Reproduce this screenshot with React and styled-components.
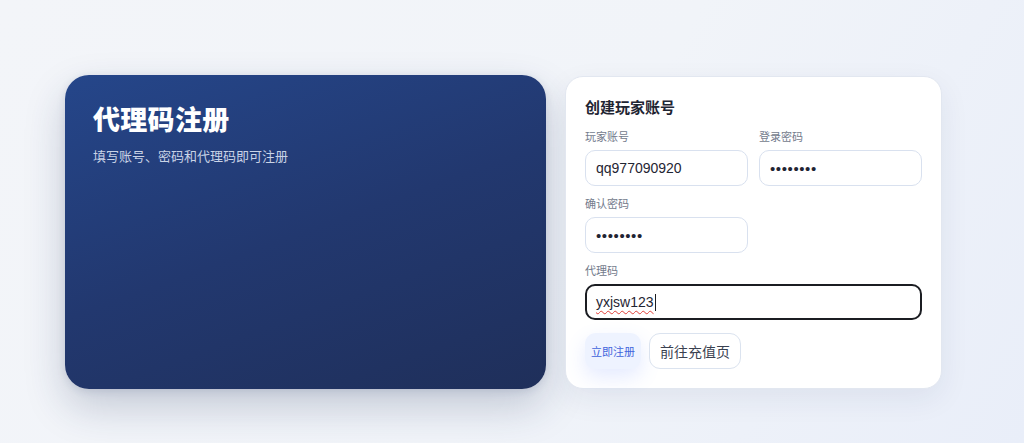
import React from "react";
import styled, { createGlobalStyle } from "styled-components";

const Global = createGlobalStyle`
  html, body { margin: 0; padding: 0; }
  body {
    width: 1024px;
    height: 443px;
    overflow: hidden;
    background: linear-gradient(120deg, #f3f5f9 0%, #f1f4f9 55%, #e9eef9 100%);
    font-family: "Inter", "Noto Sans CJK SC", sans-serif;
  }
`;

const Page = styled.div`
  box-sizing: border-box;
  height: 443px;
  padding: 75px 0 0 65px;
`;

const Layout = styled.div`
  display: grid;
  grid-template-columns: 481px 377px;
  column-gap: 19px;
  align-items: start;
`;

const Hero = styled.section`
  box-sizing: border-box;
  height: 314px;
  border-radius: 24px;
  padding: 24px 28px;
  background: linear-gradient(160deg, #25468a 0%, #22386f 50%, #1f2f5a 100%);
  box-shadow: 0 18px 40px rgba(30, 48, 90, 0.22), 0 2px 8px rgba(30, 48, 90, 0.12);
  color: #fff;
`;

const HeroTitle = styled.h1`
  margin: 0;
  font-family: "Noto Sans CJK SC", sans-serif;
  font-weight: 900;
  font-size: 27px;
  line-height: 40px;
  letter-spacing: 0.3px;
`;

const HeroText = styled.p`
  margin: 8px 0 0;
  font-family: "Noto Sans CJK SC", sans-serif;
  font-size: 13px;
  line-height: 18px;
  color: #c9d3e6;
`;

const Card = styled.section`
  box-sizing: border-box;
  height: 313px;
  margin-top: 1px;
  border-radius: 18px;
  background: #fff;
  border: 1px solid #e2e7f0;
  box-shadow: 0 10px 30px rgba(30, 48, 90, 0.07);
  padding: 18px 20px 20px 19px;
`;

const CardTitle = styled.h2`
  margin: 0 0 10px;
  font-family: "Noto Sans CJK SC", sans-serif;
  font-size: 15px;
  line-height: 24px;
  font-weight: 700;
  color: #1f2533;
`;

const Grid = styled.div`
  display: grid;
  grid-template-columns: 163px 163px;
  column-gap: 11px;
  row-gap: 10px;
`;

const Field = styled.label`
  display: flex;
  flex-direction: column;
  gap: 7px;
  grid-column: ${(p) => (p.$wide ? "1 / -1" : "auto")};
`;

const Label = styled.span`
  font-family: "Noto Sans CJK SC", sans-serif;
  font-size: 11px;
  line-height: 14px;
  color: #737b8c;
`;

const Input = styled.input`
  box-sizing: border-box;
  width: 100%;
  height: 36px;
  border-radius: 10px;
  border: 1px solid #d9e1ef;
  padding: 0 10px;
  font-family: "Liberation Sans", "Noto Sans CJK SC", sans-serif;
  font-size: ${(p) => (p.type === "password" ? "15px" : "14px")};
  color: #1f2533;
  background: #fff;
  outline: none;
  letter-spacing: ${(p) => (p.type === "password" ? "0.6px" : "0")};
`;

const FocusedInput = styled.div`
  box-sizing: border-box;
  display: flex;
  align-items: center;
  width: 100%;
  height: 36px;
  border-radius: 10px;
  border: 2px solid #1b1d22;
  padding: 0 9px;
  font-family: "Liberation Sans", "Noto Sans CJK SC", sans-serif;
  font-size: 14px;
  color: #1f2533;
  background: #fff;
`;

const Misspelled = styled.span`
  text-decoration: underline wavy #e0403a;
  text-decoration-thickness: 1px;
  text-underline-offset: 3px;
  text-decoration-skip-ink: none;
`;

const Caret = styled.span`
  display: inline-block;
  width: 1px;
  height: 17px;
  margin-left: 1px;
  background: #1b1d22;
`;

const Actions = styled.div`
  display: flex;
  gap: 8px;
  margin-top: 13px;
`;

const Button = styled.button`
  box-sizing: border-box;
  height: 36px;
  border-radius: 11px;
  font-family: "Noto Sans CJK SC", sans-serif;
  cursor: pointer;
  padding: ${(p) => (p.$primary ? "0 6px" : "0 10px")};
  font-size: ${(p) => (p.$primary ? "11px" : "14px")};
  color: ${(p) => (p.$primary ? "#3f64dc" : "#3a4150")};
  background: ${(p) => (p.$primary ? "#eef3ff" : "#fff")};
  border: ${(p) => (p.$primary ? "none" : "1px solid #dbe3ef")};
  box-shadow: ${(p) =>
    p.$primary ? "0 8px 20px rgba(90, 125, 255, 0.16)" : "none"};
`;

export default function App() {
  return (
    <>
      <Global />
      <Page>
        <Layout>
          <Hero>
            <HeroTitle>代理码注册</HeroTitle>
            <HeroText>填写账号、密码和代理码即可注册</HeroText>
          </Hero>
          <Card>
            <CardTitle>创建玩家账号</CardTitle>
            <Grid>
              <Field>
                <Label>玩家账号</Label>
                <Input defaultValue="qq977090920" readOnly />
              </Field>
              <Field>
                <Label>登录密码</Label>
                <Input type="password" defaultValue="12345678" readOnly />
              </Field>
              <Field>
                <Label>确认密码</Label>
                <Input type="password" defaultValue="12345678" readOnly />
              </Field>
              <div />
              <Field $wide>
                <Label>代理码</Label>
                <FocusedInput role="textbox">
                  <Misspelled>yxjsw123</Misspelled>
                  <Caret />
                </FocusedInput>
              </Field>
            </Grid>
            <Actions>
              <Button $primary>立即注册</Button>
              <Button>前往充值页</Button>
            </Actions>
          </Card>
        </Layout>
      </Page>
    </>
  );
}
